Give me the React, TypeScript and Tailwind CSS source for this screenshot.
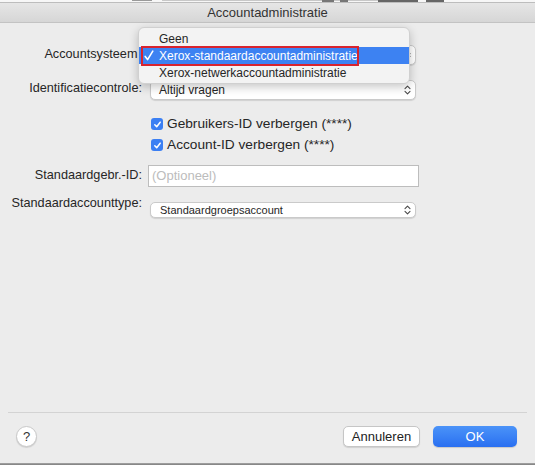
import React from "react";

function Chevrons() {
  return (
    <svg width="7" height="10" viewBox="0 0 7 10" fill="none" stroke="#4a4a4a" strokeWidth="1.1" strokeLinecap="round" strokeLinejoin="round">
      <path d="M1 3.6 L3.5 1.2 L6 3.6" />
      <path d="M1 6.4 L3.5 8.8 L6 6.4" />
    </svg>
  );
}

function Select({ text, small }: { text: string; small?: boolean }) {
  return (
    <div
      className={
        "flex items-center justify-between bg-white rounded-[5px] border border-[#cacaca] shadow-[0_1px_1px_rgba(0,0,0,0.12)] w-[266px] " +
        (small ? "h-[16px] pl-[9px] pr-[4px] text-[11px]" : "h-[20px] pl-[8px] pr-[4px] text-[12px]")
      }
    >
      <span className="text-[#262626] leading-none">{text}</span>
      <Chevrons />
    </div>
  );
}

function Checkbox({ label }: { label: string }) {
  return (
    <div className="flex items-center h-[20px] pl-[151px]">
      <div className="w-[12px] h-[12px] rounded-[3px] bg-[#3b7ff3] flex items-center justify-center">
        <svg width="9" height="9" viewBox="0 0 9 9" fill="none" stroke="white" strokeWidth="1.5" strokeLinecap="round" strokeLinejoin="round">
          <path d="M1.8 4.8 L3.7 6.8 L7.2 2.2" />
        </svg>
      </div>
      <span className="ml-[4px] text-[13.7px] text-[#262626]">{label}</span>
    </div>
  );
}

export default function App() {
  return (
    <div className="w-[535px] h-[465px] relative overflow-hidden bg-[#ececec] flex flex-col font-['Liberation_Sans',Arial,sans-serif] text-[#262626]">
      {/* top strip (window behind) */}
      <div className="h-[3px] bg-[#f7f7f7] border-b border-[#bdbdbd] flex items-start">
        <span className="ml-[132px] mt-0 w-[20px] h-[1px] bg-[#9a9a9a]" />
        <span className="ml-[10px] w-[230px] h-[1px] bg-[#c8c8c8]" />
        <span className="ml-[-70px] w-[12px] h-[2px] bg-[#777]" />
        <span className="ml-[6px] w-[8px] h-[2px] bg-[#777]" />
        <span className="ml-[30px] w-[40px] h-[2px] bg-[#666]" />
        <span className="ml-[8px] w-[18px] h-[2px] bg-[#666]" />
      </div>
      {/* title bar */}
      <div className="h-[20px] bg-gradient-to-b from-[#e6e6e6] to-[#d6d6d6] border-b border-[#c3c3c3] flex items-center justify-center">
        <span className="text-[13px] text-[#333]">Accountadministratie</span>
      </div>

      {/* body */}
      <div className="flex flex-col pt-[22px]">
        <div className="flex items-center h-[20px]">
          <span className="w-[141px] text-right text-[12.7px]">Accountsysteem:</span>
          <div className="ml-[9px]">
            <Select text="Xerox-standaardaccountadministratie" />
          </div>
        </div>
        <div className="flex items-center h-[20px] mt-[15px]">
          <span className="w-[142px] text-right text-[12.7px] -mt-[3px]">Identificatiecontrole:</span>
          <div className="ml-[8px]">
            <Select text="Altijd vragen" />
          </div>
        </div>
        <div className="mt-[14px]">
          <Checkbox label="Gebruikers-ID verbergen (****)" />
        </div>
        <div className="mt-[1px]">
          <Checkbox label="Account-ID verbergen (****)" />
        </div>
        <div className="flex items-center h-[22px] mt-[10px]">
          <span className="w-[142px] text-right text-[12.7px]">Standaardgebr.-ID:</span>
          <div className="ml-[6px] w-[271px] h-[22px] bg-white border border-[#bdbdbd] flex items-center pl-[3px]">
            <span className="text-[13px] text-[#bcbcbc]">(Optioneel)</span>
          </div>
        </div>
        <div className="flex items-start mt-[8px]">
          <span className="w-[142px] text-right text-[12.7px] h-[16px] leading-[16px]">Standaardaccounttype:</span>
          <div className="ml-[8px] mt-[7px]">
            <Select text="Standaardgroepsaccount" small />
          </div>
        </div>
      </div>

      <div className="flex-1" />

      {/* footer */}
      <div className="mx-[8px] border-t border-[#d3d3d3]" />
      <div className="flex items-center h-[21px] mt-[13px] mb-[16px]">
        <div className="ml-[16px] w-[21px] h-[21px] rounded-full bg-white border border-[#c9c9c9] shadow-[0_1px_1px_rgba(0,0,0,0.12)] flex items-center justify-center">
          <span className="text-[13px] text-[#333]">?</span>
        </div>
        <div className="flex-1" />
        <div className="w-[77px] h-[21px] rounded-[5px] bg-white border border-[#c6c6c6] shadow-[0_1px_1px_rgba(0,0,0,0.12)] flex items-center justify-center">
          <span className="text-[13px] text-[#222]">Annuleren</span>
        </div>
        <div className="ml-[13px] mr-[18px] w-[84px] h-[21px] rounded-[5px] bg-gradient-to-b from-[#4b93f8] to-[#2a6ff1] shadow-[0_1px_1px_rgba(0,0,0,0.15)] flex items-center justify-center">
          <span className="text-[13px] text-white font-medium">OK</span>
        </div>
      </div>
      <div className="h-[2px] bg-gradient-to-b from-[#a8a8a8] to-[#7d7d7d]" />

      {/* popup menu overlay */}
      <div className="absolute left-[138px] top-[27px] w-[272px] h-[57px] rounded-[6px] bg-[#f3f3f3] border border-[#d0d0d0] shadow-[0_3px_10px_rgba(0,0,0,0.22)] pt-[2px] flex flex-col">
        <div className="h-[17px] flex items-center pl-[20px] text-[12px] text-[#262626]">Geen</div>
        <div className="h-[17px] flex items-center bg-[#3d82f2] text-white text-[12px]">
          <span className="w-[20px] pl-[5px] flex items-center">
            <svg width="10" height="11" viewBox="0 0 10 11" fill="none" stroke="white" strokeWidth="1.6" strokeLinecap="round" strokeLinejoin="round">
              <path d="M1.2 6.4 L3.6 9.6 L8.8 1.2" />
            </svg>
          </span>
          <span>Xerox-standaardaccountadministratie</span>
        </div>
        <div className="h-[17px] flex items-center pl-[20px] text-[12px] text-[#262626]">Xerox-netwerkaccountadministratie</div>
        {/* red annotation box */}
        <div className="absolute left-[2px] top-[18px] w-[218px] h-[20px] border-2 border-[#d8232e]" />
      </div>
    </div>
  );
}
